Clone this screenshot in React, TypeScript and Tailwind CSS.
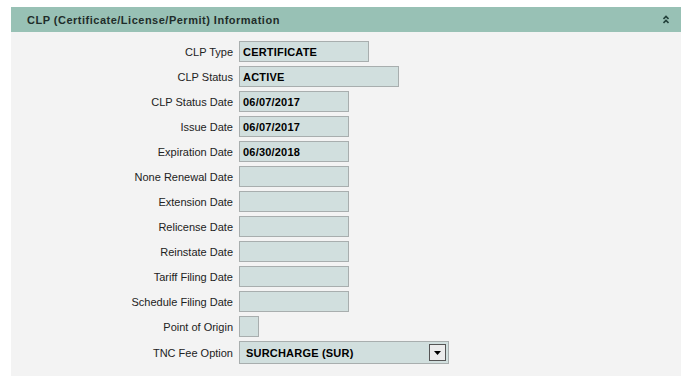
import React from 'react';

type Field = { label: string; value?: string; width: string };

const fields: Field[] = [
  { label: 'CLP Type', value: 'CERTIFICATE', width: 'w-[130px]' },
  { label: 'CLP Status', value: 'ACTIVE', width: 'w-[160px]' },
  { label: 'CLP Status Date', value: '06/07/2017', width: 'w-[110px]' },
  { label: 'Issue Date', value: '06/07/2017', width: 'w-[110px]' },
  { label: 'Expiration Date', value: '06/30/2018', width: 'w-[110px]' },
  { label: 'None Renewal Date', width: 'w-[110px]' },
  { label: 'Extension Date', width: 'w-[110px]' },
  { label: 'Relicense Date', width: 'w-[110px]' },
  { label: 'Reinstate Date', width: 'w-[110px]' },
  { label: 'Tariff Filing Date', width: 'w-[110px]' },
  { label: 'Schedule Filing Date', width: 'w-[110px]' },
  { label: 'Point of Origin', width: 'w-[20px]' },
];

const App: React.FC = () => {
  return (
    <div className="min-h-screen bg-white pt-[7px] pl-[11px] text-[11px] font-['Liberation_Sans',Arial,sans-serif]">
      <div className="w-[670px] bg-[#f3f3f3]">
        <div className="h-[25px] bg-[#98c1b5] flex items-center justify-between pl-[16px] pr-[12px]">
          <span className="font-bold text-[#1f2d2a] tracking-[0.5px] pt-px">CLP (Certificate/License/Permit) Information</span>
          <svg width="6" height="9" viewBox="0 0 6 9">
            <path d="M0.5 4 L3 1.5 L5.5 4 M0.5 8 L3 5.5 L5.5 8" stroke="#22403a" strokeWidth="1.6" fill="none" />
          </svg>
        </div>
        <div className="flex flex-col gap-[4px] pt-[9px] pb-[12px]">
          {fields.map(f => (
            <div key={f.label} className="flex items-center h-[21px]">
              <div className="w-[222px] text-right text-[#222] pt-px">{f.label}</div>
              <div className={`ml-[6px] h-[21px] ${f.width} bg-[#d1dfde] border border-[#a8aeae] px-[3px] pt-px flex items-center font-bold text-black tracking-[0.2px]`}>
                {f.value}
              </div>
            </div>
          ))}
          <div className="flex items-center h-[23px]">
            <div className="w-[222px] text-right text-[#222] pt-px">TNC Fee Option</div>
            <div className="ml-[6px] h-[23px] w-[210px] bg-[#d1dfde] border border-[#a8aeae] pl-[6px] pr-[2px] flex items-center justify-between font-bold text-black tracking-[0.2px]">
              <span className="pt-px">SURCHARGE (SUR)</span>
              <div className="w-[17px] h-[17px] border border-[#555] bg-[#ececec] flex items-center justify-center">
                <svg width="7" height="4" viewBox="0 0 7 4">
                  <path d="M0 0 L7 0 L3.5 4 Z" fill="#000" />
                </svg>
              </div>
            </div>
          </div>
        </div>
      </div>
    </div>
  );
};

export default App;
